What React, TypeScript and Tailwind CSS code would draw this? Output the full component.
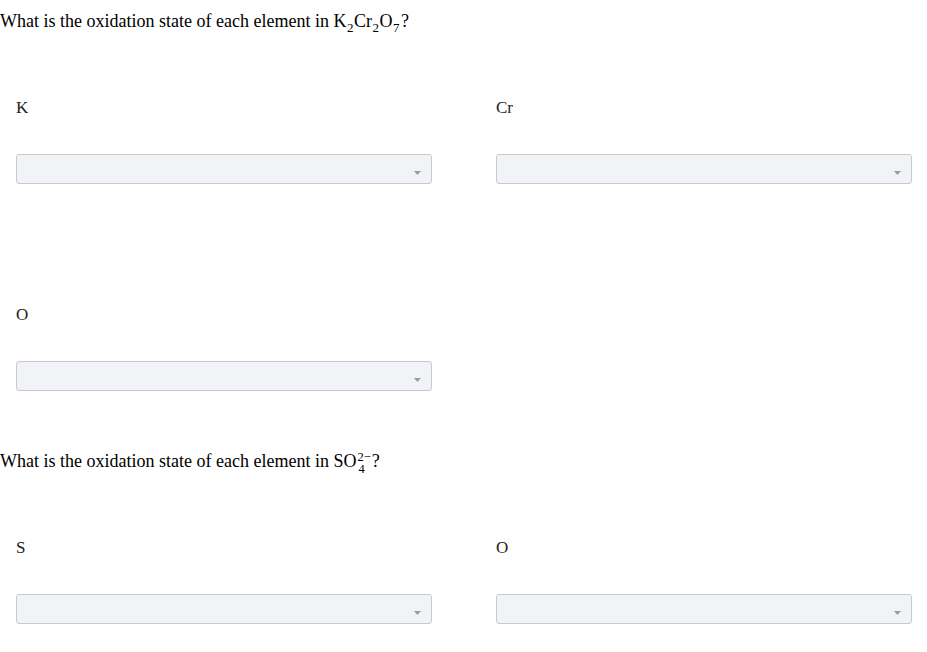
import React from "react";

const serif = { fontFamily: '"Liberation Serif", "Times New Roman", serif' };

function Select() {
  return (
    <div className="relative h-[30px] w-full rounded-[3px] border border-[#c9cacd] bg-[#f2f3f7]">
      <svg
        className="absolute right-[10px] top-[16px]"
        width="7"
        height="4"
        viewBox="0 0 7 4"
      >
        <path d="M0 0 L7 0 L3.5 4 Z" fill="#9a9a9a" />
      </svg>
    </div>
  );
}

function Field({ label }: { label: string }) {
  return (
    <div className="pt-[56px]">
      <div className="h-[20px] text-[17px] leading-[20px] text-[#222]">{label}</div>
      <div className="mt-[36px]">
        <Select />
      </div>
    </div>
  );
}

function Sub({ children }: { children: React.ReactNode }) {
  return (
    <span className="relative top-[5px] inline-block px-[0.5px] text-[13px] leading-none">
      {children}
    </span>
  );
}

export default function App() {
  return (
    <div className="w-[927px] h-[652px] bg-white text-black" style={serif}>
      <div className="h-[42px] flex items-center text-[18px] leading-[20px] whitespace-nowrap">
        <span>
          {"What is the oxidation state of each element in "}
          <span>K</span>
          <Sub>2</Sub>
          <span>Cr</span>
          <Sub>2</Sub>
          <span>O</span>
          <Sub>7</Sub>
          <span className="ml-[1px]">?</span>
        </span>
      </div>
      <div className="grid grid-cols-[416px_416px] gap-x-[64px] gap-y-[65px] pl-[16px]">
        <Field label="K" />
        <Field label="Cr" />
        <Field label="O" />
        <div />
      </div>
      <div className="mt-[49px] h-[42px] flex items-center text-[18px] leading-[20px] whitespace-nowrap">
        <span className="inline-flex items-center">
          <span>{"What is the oxidation state of each element in\u00a0"}</span>
          <span>SO</span>
          <span className="inline-flex flex-col items-start text-[12.5px] leading-[12px] ml-[1px] translate-y-[2px]">
            <span>2−</span>
            <span className="ml-[1px]">4</span>
          </span>
          <span className="ml-[1px]">?</span>
        </span>
      </div>
      <div className="grid grid-cols-[416px_416px] gap-x-[64px] pl-[16px]">
        <Field label="S" />
        <Field label="O" />
      </div>
    </div>
  );
}
